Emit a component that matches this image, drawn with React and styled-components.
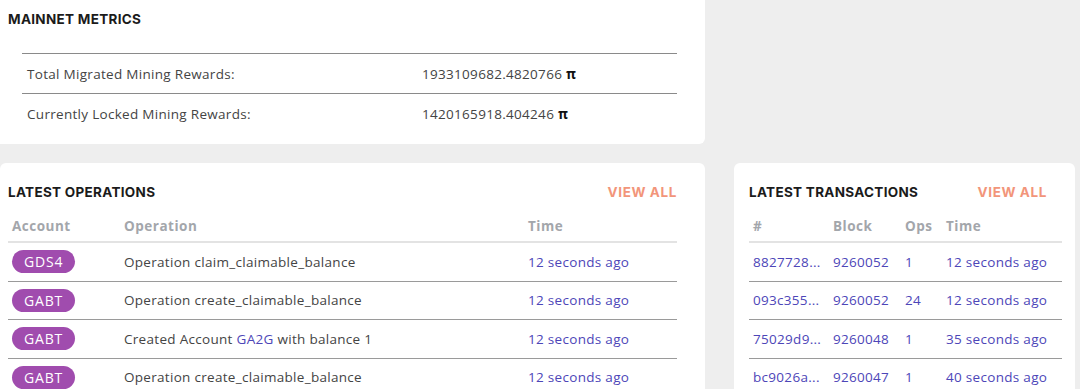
import styled, { createGlobalStyle } from "styled-components";

const GlobalStyle = createGlobalStyle`
  body {
    margin: 0;
    background: #eeeeee;
    font-family: "Open Sans", "Liberation Sans", sans-serif;
    color: #3a3a3a;
  }
`;

const operations = [
  { account: "GDS4", text: "Operation claim_claimable_balance", time: "12 seconds ago" },
  { account: "GABT", text: "Operation create_claimable_balance", time: "12 seconds ago" },
  { account: "GABT", created: "GA2G", time: "12 seconds ago" },
  { account: "GABT", text: "Operation create_claimable_balance", time: "12 seconds ago" },
];

const transactions = [
  { hash: "8827728...", block: "9260052", ops: "1", time: "12 seconds ago" },
  { hash: "093c355...", block: "9260052", ops: "24", time: "12 seconds ago" },
  { hash: "75029d9...", block: "9260048", ops: "1", time: "35 seconds ago" },
  { hash: "bc9026a...", block: "9260047", ops: "1", time: "40 seconds ago" },
];

function App() {
  return (
    <Page>
      <GlobalStyle />
      <MetricsCard>
        <Title>Mainnet Metrics</Title>
        <Metrics>
          <MetricRow>
            <span>Total Migrated Mining Rewards:</span>
            <span>1933109682.4820766 <Pi>π</Pi></span>
          </MetricRow>
          <MetricRow>
            <span>Currently Locked Mining Rewards:</span>
            <span>1420165918.404246 <Pi>π</Pi></span>
          </MetricRow>
        </Metrics>
      </MetricsCard>
      <Spacer />

      <Card $pl={8} $pr={28}>
        <CardHead>
          <Title>Latest Operations</Title>
          <ViewAll href="#">View All</ViewAll>
        </CardHead>
        <OpsRow $head>
          <Cell>Account</Cell>
          <Cell>Operation</Cell>
          <Cell>Time</Cell>
        </OpsRow>
        {operations.map((op, i) => (
          <OpsRow key={i}>
            <Cell><Badge>{op.account}</Badge></Cell>
            <Cell>
              {op.created ? (
                <>Created Account <Link>{op.created}</Link> with balance 1</>
              ) : op.text}
            </Cell>
            <Cell><Link>{op.time}</Link></Cell>
          </OpsRow>
        ))}
      </Card>

      <Card $pl={15} $pr={13}>
        <CardHead $inset={15}>
          <Title>Latest Transactions</Title>
          <ViewAll href="#">View All</ViewAll>
        </CardHead>
        <TxRow $head>
          <Cell>#</Cell>
          <Cell>Block</Cell>
          <Cell>Ops</Cell>
          <Cell>Time</Cell>
        </TxRow>
        {transactions.map((tx, i) => (
          <TxRow key={i}>
            <Cell><Link>{tx.hash}</Link></Cell>
            <Cell><Link>{tx.block}</Link></Cell>
            <Cell><Link>{tx.ops}</Link></Cell>
            <Cell><Link>{tx.time}</Link></Cell>
          </TxRow>
        ))}
      </Card>
    </Page>
  );
}

const Page = styled.div`
  display: grid;
  grid-template-columns: 705px 341px;
  column-gap: 29px;
  width: 1080px;
  height: 389px;
  overflow: hidden;
`;

const MetricsCard = styled.section`
  background: #fff;
  height: 144px;
  border-radius: 0 0 6px 0;
  padding: 10px 28px 0 8px;
  box-sizing: border-box;
`;

const Spacer = styled.div``;

const Title = styled.h2`
  margin: 0;
  font-family: "Inter", "Liberation Sans", sans-serif;
  font-weight: 700;
  font-size: 13.5px;
  letter-spacing: 0.3px;
  text-transform: uppercase;
  color: #1b1b1b;
  line-height: 18px;
`;

const Metrics = styled.div`
  margin: 25px 0 0 14px;
`;

const MetricRow = styled.div`
  display: grid;
  grid-template-columns: 395px 1fr;
  align-items: center;
  height: 39px;
  padding-left: 5px;
  border-top: 1px solid #8a8a8a;
  font-size: 13.5px;
  letter-spacing: 0.3px;
  color: #444;
`;

const Pi = styled.b`
  color: #111;
`;

const Card = styled.section`
  margin-top: 19px;
  background: #fff;
  border-radius: 6px 6px 0 0;
  padding: 20px ${(p) => p.$pr}px 0 ${(p) => p.$pl}px;
  height: 240px;
`;

const CardHead = styled.div`
  display: flex;
  justify-content: space-between;
  align-items: center;
  padding-right: ${(p) => p.$inset || 0}px;
  margin-bottom: 10px;
`;

const ViewAll = styled.a`
  font-family: "Inter", "Liberation Sans", sans-serif;
  font-weight: 700;
  font-size: 13.5px;
  letter-spacing: 0.6px;
  text-transform: uppercase;
  color: #f2957a;
  text-decoration: none;
`;

const Row = styled.div`
  display: grid;
  align-items: center;
  box-sizing: border-box;
  height: ${(p) => (p.$head ? "32px" : "38.5px")};
  border-bottom: ${(p) => (p.$head ? "2px solid #e3e3e3" : "1px solid #9a9a9a")};
  font-size: 13.5px;
  letter-spacing: ${(p) => (p.$head ? "0.5px" : "0.3px")};
  font-weight: ${(p) => (p.$head ? 700 : 400)};
  color: ${(p) => (p.$head ? "#a3a6ab" : "#444")};
`;

const OpsRow = styled(Row)`
  grid-template-columns: 112px 404px 1fr;
`;

const TxRow = styled(Row)`
  grid-template-columns: 80px 72px 41px 1fr;
`;

const Cell = styled.div`
  padding-left: 4px;
  white-space: nowrap;
  overflow: hidden;
`;

const Badge = styled.span`
  display: inline-block;
  background: #a04cae;
  color: #fff;
  border-radius: 12px;
  padding: 0 12px;
  line-height: 23px;
  font-size: 14px;
  letter-spacing: 0.8px;
`;

const Link = styled.span`
  color: #4d46b8;
`;

export default App;
